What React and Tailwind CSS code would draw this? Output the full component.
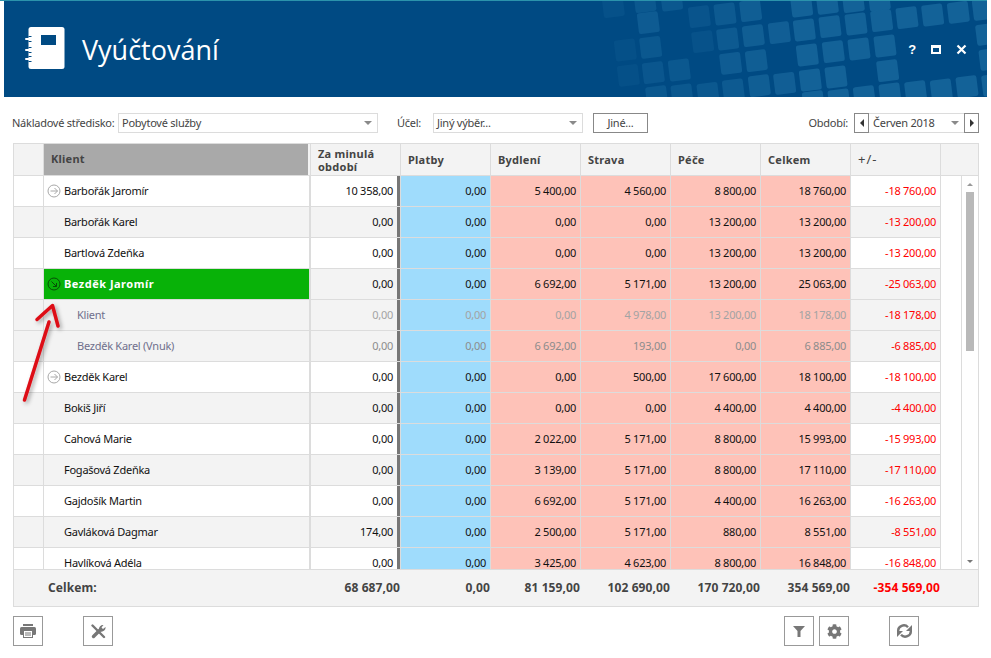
import React from "react";
import { FaCog } from "react-icons/fa";

const rows = [
  { n: "Barbořák Jaromír", i: 1, z: 0, v: ["10 358,00", "0,00", "5 400,00", "4 560,00", "8 800,00", "18 760,00", "-18 760,00"] },
  { n: "Barbořák Karel", z: 1, v: ["0,00", "0,00", "0,00", "0,00", "13 200,00", "13 200,00", "-13 200,00"] },
  { n: "Bartlová Zdeňka", z: 0, v: ["0,00", "0,00", "0,00", "0,00", "13 200,00", "13 200,00", "-13 200,00"] },
  { n: "Bezděk Jaromír", i: 2, hl: 1, z: 1, v: ["0,00", "0,00", "6 692,00", "5 171,00", "13 200,00", "25 063,00", "-25 063,00"] },
  { n: "Klient", sub: 1, z: 1, c: "text-[#a3a3a3]", v: ["0,00", "0,00", "0,00", "4 978,00", "13 200,00", "18 178,00", "-18 178,00"] },
  { n: "Bezděk Karel (Vnuk)", sub: 1, z: 1, c: "text-[#8c8c8c]", v: ["0,00", "0,00", "6 692,00", "193,00", "0,00", "6 885,00", "-6 885,00"] },
  { n: "Bezděk Karel", i: 1, z: 0, v: ["0,00", "0,00", "0,00", "500,00", "17 600,00", "18 100,00", "-18 100,00"] },
  { n: "Bokiš Jiří", z: 1, v: ["0,00", "0,00", "0,00", "0,00", "4 400,00", "4 400,00", "-4 400,00"] },
  { n: "Cahová Marie", z: 0, v: ["0,00", "0,00", "2 022,00", "5 171,00", "8 800,00", "15 993,00", "-15 993,00"] },
  { n: "Fogašová Zdeňka", z: 1, v: ["0,00", "0,00", "3 139,00", "5 171,00", "8 800,00", "17 110,00", "-17 110,00"] },
  { n: "Gajdošík Martin", z: 0, v: ["0,00", "0,00", "6 692,00", "5 171,00", "4 400,00", "16 263,00", "-16 263,00"] },
  { n: "Gavláková Dagmar", z: 1, v: ["174,00", "0,00", "2 500,00", "5 171,00", "880,00", "8 551,00", "-8 551,00"] },
  { n: "Havlíková Adéla", z: 0, v: ["0,00", "0,00", "3 425,00", "4 623,00", "8 800,00", "16 848,00", "-16 848,00"] },
];

const z8 = [
  [335, 18, 1], [412, 10, 1], [490, 5, 1], [568, 0, 1],
  [28, 50, 0.45], [105, 42, 0.7], [182, 32, 0.85],
  [268, 98, 0.9], [343, 90, 1], [420, 80, 1], [498, 72, 1], [575, 62, 1], [651, 53, 1], [728, 45, 1], [805, 37, 1], [880, 28, 1],
  [38, 125, 0.35], [113, 117, 0.7], [190, 107, 0.85],
  [352, 165, 1], [430, 155, 1], [507, 147, 1], [585, 138, 1], [890, 103, 1],
  [122, 190, 0.8], [199, 182, 0.85], [593, 212, 1], [900, 178, 1],
  [54, 280, 0.6], [130, 270, 0.7], [208, 257, 0.85], [284, 250, 0.9], [361, 240, 1], [438, 231, 1],
  [370, 305, 1], [447, 300, 1], [523, 290, 1], [600, 282, 1], [677, 275, 1], [754, 270, 1], [831, 260, 1], [908, 255, 1],
];
const z7 = [
  [745, 68, 0.75], [752, 142, 0.6], [676, 150, 0.25], [685, 226, 0.25], [760, 218, 0.55], [838, 210, 0.6],
  [770, 290, 0.6], [846, 285, 0.6], [640, 20, 0.3], [735, 5, 0.6], [815, 0, 0.6],
];
const squares = [
  ...z8.map(([x, y, o]) => [x / 3 + 690, y / 3, o]),
  ...z7.map(([x, y, o]) => [x / 3 + 400, y / 3, o]),
];

function Notebook() {
  return (
    <svg width="42" height="44" viewBox="0 0 42 44" className="shrink-0">
      <rect x="3.5" y="0" width="36" height="42" rx="2.5" fill="#fff" />
      <rect x="16" y="8" width="15" height="10" fill="#004a83" />
      <g stroke="#fff" strokeWidth="2" strokeLinecap="round">
        <path d="M1 12h5M1 23h5M1 32h5" />
      </g>
      <g stroke="#004a83" strokeWidth="1">
        <path d="M3.5 9.5h3M3.5 14.5h3M3.5 20.5h3M3.5 25.5h3M3.5 29.5h3M3.5 34.5h3" />
      </g>
    </svg>
  );
}

function CircleArrow({ dark }) {
  const c = dark ? "#064f06" : "#a8a8a8";
  return (
    <svg width="14" height="14" viewBox="0 0 14 14" className="shrink-0">
      <circle cx="7" cy="7" r="6" fill="none" stroke={c} strokeWidth="1" />
      {dark ? (
        <path d="M4.5 4.5l5 5M9.5 6v3.5H6" fill="none" stroke={c} strokeWidth="1" />
      ) : (
        <path d="M3.5 7h7M7.5 4l3 3-3 3" fill="none" stroke={c} strokeWidth="1" />
      )}
    </svg>
  );
}

function Caret() {
  return <span className="w-0 h-0 border-l-[4px] border-r-[4px] border-t-[4px] border-l-transparent border-r-transparent border-t-[#8a8a8a]" />;
}

function Select({ className, text }) {
  return (
    <div className={`h-[20px] border border-[#dcdcdc] flex items-center justify-between pl-[3px] pr-[5px] ${className}`}>
      <span>{text}</span>
      <Caret />
    </div>
  );
}

function IconBtn({ children, className = "" }) {
  return (
    <div className={`w-[30px] h-[30px] border border-[#999] flex items-center justify-center text-[#777] ${className}`}>
      {children}
    </div>
  );
}

const PrintIcon = () => (
  <svg width="16" height="14" viewBox="0 0 16 14">
    <rect x="3" y="0" width="10" height="2" fill="#777" />
    <rect x="0" y="3" width="16" height="8" rx="1.5" fill="#777" />
    <rect x="3.5" y="6.5" width="9" height="7" fill="#fff" stroke="#777" />
    <path d="M5 9h6M5 11h6" stroke="#777" />
  </svg>
);
const ToolsIcon = () => (
  <svg width="15" height="15" viewBox="0 0 15 15">
    <path d="M1.5 1.5L13 13" stroke="#777" strokeWidth="2.4" strokeLinecap="round" />
    <path d="M2.5 12.5L9.5 5.5" stroke="#777" strokeWidth="3.4" strokeLinecap="round" />
    <path d="M8 5.5A4 4 0 0 1 12.5 1L10.5 3.5L12 5L14.5 3A4 4 0 0 1 9.5 7.5Z" fill="#777" />
  </svg>
);
const FilterIcon = () => (
  <svg width="12" height="11" viewBox="0 0 12 11">
    <path d="M0 0H12L7.5 5V11H4.5V5Z" fill="#777" />
  </svg>
);
const SyncIcon = () => (
  <svg width="17" height="14" viewBox="0 0 17 14">
    <path d="M2.2 7A5.6 5.2 0 0 1 12 3.2" fill="none" stroke="#777" strokeWidth="2.4" />
    <path d="M16 1V7H10Z" fill="#777" />
    <path d="M14.8 7A5.6 5.2 0 0 1 5 10.8" fill="none" stroke="#777" strokeWidth="2.4" />
    <path d="M1 13V7H7Z" fill="#777" />
  </svg>
);

const headCell = "w-[90px] shrink-0 h-full border-r border-[#dcdcdc] px-[7px] flex items-center font-bold text-[#444] leading-[13px] tracking-[0.25px]";

function Row({ r }) {
  const zebra = r.z ? "bg-[#f3f3f3]" : "bg-white";
  const txt = r.sub ? r.c : "text-[#111]";
  const num = "w-[90px] shrink-0 h-full flex items-center justify-end pr-[4px] border-r border-[#dcdcdc]";
  return (
    <div className="flex h-[31px] shrink-0 border-b border-[#dcdcdc]">
      <div className={`w-[30px] shrink-0 h-full border-r border-[#dcdcdc] ${zebra}`} />
      <div className={`w-[267px] shrink-0 h-full flex items-center border-r-2 border-[#dcdcdc] ${r.hl ? "bg-[#08b208] text-white font-bold tracking-[0.5px]" : zebra} ${r.sub ? "pl-[33px] text-[#6f6f8c]" : r.i ? "pl-[3px]" : "pl-[20px]"} ${!r.hl && !r.sub ? "text-[#111]" : ""}`}>
        {r.i ? <CircleArrow dark={r.hl} /> : null}
        <span className={r.i ? "ml-[3px]" : ""}>{r.n}</span>
      </div>
      <div className={`${num} pr-[7px] shadow-[inset_-3px_0_0_#777] ${zebra} ${txt}`}>{r.v[0]}</div>
      <div className={`${num} bg-[#9fdcfc] ${txt}`}>{r.v[1]}</div>
      {[2, 3, 4, 5].map((k) => (
        <div key={k} className={`${num} bg-[#fec2b8] ${txt}`}>{r.v[k]}</div>
      ))}
      <div className={`${num} ${zebra} text-[#f00]`}>{r.v[6]}</div>
    </div>
  );
}

export default function App() {
  return (
    <div className="relative w-[991px] h-[658px] bg-white overflow-hidden font-['Noto_Sans',sans-serif] text-[11px] tracking-[-0.25px] text-[#333]">
      <div className="w-[987px] h-[1px] bg-[#2b93ac]" />
      <header className="relative ml-[4px] w-[983px] h-[96px] bg-[#004a83] overflow-hidden flex items-center pl-[21px] pr-[20px]">
        <svg className="absolute left-0 top-0" width="983" height="96" viewBox="4 1 983 96">
          {squares.map(([x, y, o], i) => (
            <rect key={i} x={x - 10.5} y={y - 10.5} width="21" height="21" rx="2.5" fill="#1d6ea3" opacity={o * 0.65} transform={`rotate(-7 ${x} ${y})`} />
          ))}
        </svg>
        <div className="relative flex items-center w-full">
          <Notebook />
          <h1 className="ml-[15px] text-[27px] leading-none tracking-normal font-['Open_Sans',sans-serif] font-normal text-white">Vyúčtování</h1>
          <div className="ml-auto flex items-center gap-[15px] text-white">
            <span className="text-[13px] font-bold font-['Liberation_Sans',sans-serif] leading-none">?</span>
            <span className="w-[10px] h-[9px] border-2 border-t-[3px] border-white" />
            <svg width="11" height="11" viewBox="0 0 11 11"><path d="M1.5 1.5l8 8M9.5 1.5l-8 8" stroke="#fff" strokeWidth="2.2" /></svg>
          </div>
        </div>
      </header>

      <div className="flex items-center h-[20px] mt-[16px] pl-[12px] pr-[12px] text-[#444]">
        <span className="w-[106px] shrink-0 whitespace-nowrap">Nákladové středisko:</span>
        <Select className="w-[260px]" text="Pobytové služby" />
        <span className="ml-[19px] w-[36px] shrink-0">Účel:</span>
        <Select className="w-[150px]" text="Jiný výběr..." />
        <div className="ml-[10px] w-[55px] h-[20px] border border-[#888] flex items-center justify-center">Jiné...</div>
        <span className="ml-auto mr-[6px]">Období:</span>
        <div className="flex items-center h-[20px]">
          <div className="w-[15px] h-[20px] border border-[#888] flex items-center justify-center">
            <span className="w-0 h-0 border-t-[4px] border-b-[4px] border-r-[4px] border-t-transparent border-b-transparent border-r-[#333]" />
          </div>
          <Select className="w-[95px] border-l-0 border-r-0 pl-[4px]" text="Červen 2018" />
          <div className="w-[15px] h-[20px] border border-[#888] flex items-center justify-center">
            <span className="w-0 h-0 border-t-[4px] border-b-[4px] border-l-[4px] border-t-transparent border-b-transparent border-l-[#333]" />
          </div>
        </div>
      </div>

      <div className="mt-[10px] ml-[13px] w-[966px] h-[464px] border border-[#dcdcdc] flex flex-col">
        <div className="flex h-[32px] shrink-0 border-b border-[#dcdcdc] bg-[#f3f3f3]">
          <div className="w-[30px] shrink-0 h-full border-r border-[#dcdcdc]" />
          <div className="w-[267px] shrink-0 h-full border-r border-[#dcdcdc] pr-[2px]">
            <div className="h-full bg-[#a9a9a9] pl-[7px] flex items-center font-bold tracking-[0.25px] text-[#444]">Klient</div>
          </div>
          <div className={headCell}><span>Za minulá<br />období</span></div>
          <div className={headCell}>Platby</div>
          <div className={headCell}>Bydlení</div>
          <div className={headCell}>Strava</div>
          <div className={headCell}>Péče</div>
          <div className={headCell}>Celkem</div>
          <div className={`${headCell} text-[13px] font-normal tracking-[1px]`}>+/-</div>
        </div>

        <div className="flex h-[393px] shrink-0 overflow-hidden">
          <div className="w-[927px] shrink-0 flex flex-col overflow-hidden">
            {rows.map((r) => <Row key={r.n} r={r} />)}
          </div>
          <div className="w-[21px] shrink-0 border-r border-[#dcdcdc]" />
          <div className="w-[16px] shrink-0 flex flex-col items-center pt-[7px] pb-[6px]">
            <span className="w-0 h-0 border-l-[3px] border-r-[3px] border-b-[3px] border-l-transparent border-r-transparent border-b-[#999]" />
            <div className="w-[8px] h-[159px] mt-[6px] bg-[#b9b9b9]" />
            <span className="mt-auto w-0 h-0 border-l-[3px] border-r-[3px] border-t-[3px] border-l-transparent border-r-transparent border-t-[#777]" />
          </div>
        </div>

        <div className="flex h-[37px] shrink-0 border-t border-[#dcdcdc] bg-[#f3f3f3] font-bold text-[12px] tracking-[0.1px] text-[#444]">
          <div className="w-[297px] shrink-0 pl-[34px] flex items-center">Celkem:</div>
          {["68 687,00", "0,00", "81 159,00", "102 690,00", "170 720,00", "354 569,00"].map((t, i) => (
            <div key={i} className="w-[90px] shrink-0 flex items-center justify-end pr-[1px]">{t}</div>
          ))}
          <div className="w-[90px] shrink-0 flex items-center justify-end pr-[1px] text-[#f00]">-354 569,00</div>
        </div>
      </div>

      <div className="flex items-center mt-[9px] ml-[13px] w-[906px]">
        <IconBtn><PrintIcon /></IconBtn>
        <IconBtn className="ml-[40px]"><ToolsIcon /></IconBtn>
        <IconBtn className="ml-auto"><FilterIcon /></IconBtn>
        <IconBtn className="ml-[5px]"><FaCog size={15} /></IconBtn>
        <IconBtn className="ml-[40px]"><SyncIcon /></IconBtn>
      </div>

      <svg className="absolute left-[16px] top-[300px] pointer-events-none" width="50" height="108" viewBox="16 300 50 108">
        <defs>
          <filter id="sh" x="-30%" y="-30%" width="170%" height="170%"><feDropShadow dx="2" dy="2" stdDeviation="2" floodColor="#000" floodOpacity="0.35" /></filter>
        </defs>
        <g filter="url(#sh)" fill="none" stroke="#dd0a14" strokeWidth="3.5" strokeLinecap="round" strokeLinejoin="round">
          <path d="M24.5 400L49 322" />
          <path d="M37 319.5L52.5 305.5L58 326" />
        </g>
      </svg>
    </div>
  );
}
